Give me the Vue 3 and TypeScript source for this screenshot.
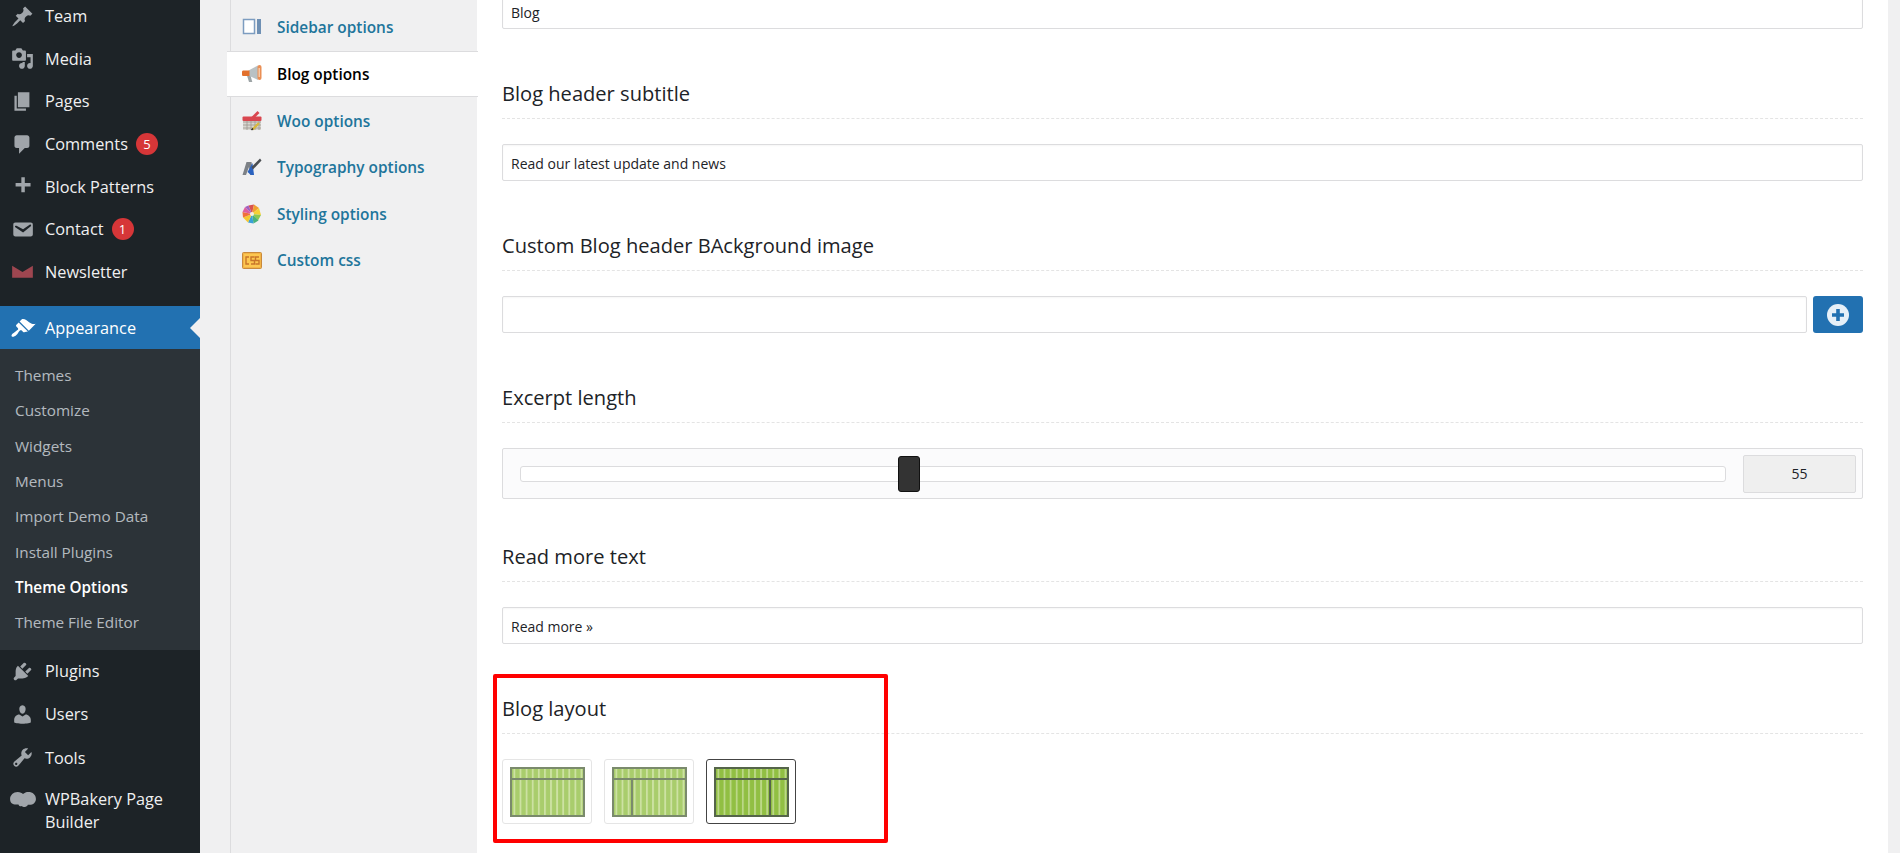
<script setup lang="ts">
const topMenu = [
  { label: 'Team', icon: 'M10.44 3.02l1.82-1.82 6.36 6.35-1.83 1.82c-1.05-.68-2.48-.57-3.41.36l-.75.75c-.92.93-1.04 2.35-.35 3.41l-1.83 1.82-2.41-2.41-2.8 2.79c-.42.42-3.38 2.71-3.8 2.29s1.86-3.39 2.28-3.81l2.79-2.79L4.1 9.36l1.83-1.82c1.05.69 2.48.57 3.4-.36l.75-.75c.93-.92 1.05-2.35.36-3.41z' },
  { label: 'Media', icon: 'M13 11V4c0-.55-.45-1-1-1h-1.67L9 1H5L3.67 3H2c-.55 0-1 .45-1 1v7c0 .55.45 1 1 1h10c.55 0 1-.45 1-1zM7 4.5c1.38 0 2.5 1.12 2.5 2.5S8.38 9.5 7 9.5 4.5 8.38 4.5 7 5.62 4.5 7 4.5zM14 6h5v10.5c0 1.38-1.12 2.5-2.5 2.5S14 17.88 14 16.5s1.12-2.5 2.5-2.5c.17 0 .34.02.5.05V9h-3V6zm-4 8.05V13h2v3.5c0 1.38-1.12 2.5-2.5 2.5S7 17.88 7 16.5 8.12 14 9.5 14c.17 0 .34.02.5.05z' },
  { label: 'Pages', icon: 'M6 15V2h10v13H6zm-1 1h8v2H3V5h2v11z' },
  { label: 'Comments', badge: '5', icon: 'M5 2h9c1.1 0 2 .9 2 2v7c0 1.1-.9 2-2 2h-2l-5 5v-5H5c-1.1 0-2-.9-2-2V4c0-1.1.9-2 2-2z' },
  { label: 'Block Patterns', icon: 'M17 7v3h-5v5H9v-5H4V7h5V2h3v5h5z' },
  { label: 'Contact', badge: '1', icon: 'M3.87 4h13.25C18.37 4 19 4.59 19 5.79v8.42c0 1.19-.63 1.79-1.88 1.79H3.87c-1.25 0-1.88-.6-1.88-1.79V5.79c0-1.2.63-1.79 1.88-1.79zm6.62 8.6l6.74-5.53c.24-.2.43-.66.13-1.07-.29-.41-.82-.42-1.17-.17l-5.7 3.86L4.8 6.83c-.35-.25-.88-.24-1.17.17-.3.41-.11.87.13 1.07z' },
  { label: 'Newsletter', red: true, icon: 'M1 5l9 5.500L19 5v10.500H1z' },
]
const brush = 'M14.48 11.06L7.41 3.99l1.5-1.5c.5-.56 2.3-.47 3.51.32 1.21.8 1.43 1.28 2.91 2.1 1.18.64 2.45 1.26 4.45.85zm-.71.71L6.7 4.7 4.93 6.47c-.39.39-.39 1.02 0 1.41l1.06 1.06c.39.39.39 1.03 0 1.42-.6.6-1.43 1.11-2.21 1.69-.35.26-.7.53-1.01.84C1.43 13.23.78 15.03 1.4 15.6c.56.6 2.36-.05 3.7-1.39.31-.31.58-.66.84-1.01.58-.78 1.09-1.61 1.69-2.21.39-.39 1.03-.39 1.42 0l1.06 1.06c.39.39 1.02.39 1.41 0z'
const subMenu = ['Themes', 'Customize', 'Widgets', 'Menus', 'Import Demo Data', 'Install Plugins', 'Theme Options', 'Theme File Editor']
const bottomMenu = [
  { label: 'Plugins', icon: 'M13.11 4.36L9.87 7.6 8 5.73l3.24-3.24c.35-.34 1.05-.2 1.56.32.52.51.66 1.21.31 1.55zm-8 1.77l.91-1.12 9.01 9.01-1.19.84c-.71.71-2.63 1.16-3.82 1.16H6.14L4.9 17.26c-.59.59-1.54.59-2.12 0-.59-.58-.59-1.53 0-2.12l1.24-1.24v-3.88c0-1.13.4-3.19 1.09-3.89zm7.26 3.97l3.24-3.24c.34-.35 1.04-.21 1.55.31.52.51.66 1.21.31 1.55l-3.24 3.25z' },
  { label: 'Users', icon: 'M10 9.25c-2.27 0-2.73-3.44-2.73-3.44C7 4.02 7.82 2 9.97 2c2.16 0 2.98 2.02 2.71 3.81 0 0-.41 3.44-2.68 3.44zm0 2.57L12.72 10c2.39 0 4.52 2.33 4.52 4.53v2.49s-3.65 1.13-7.24 1.13c-3.65 0-7.24-1.13-7.24-1.13v-2.49c0-2.25 1.94-4.48 4.47-4.48z' },
  { label: 'Tools', icon: 'M16.68 9.77c-1.34 1.34-3.3 1.67-4.95.99l-5.41 6.52c-.99.99-2.59.99-3.58 0s-.99-2.59 0-3.57l6.52-5.42c-.68-1.65-.35-3.61.99-4.95 1.28-1.28 3.12-1.62 4.72-1.06l-2.89 2.89 2.82 2.82 2.86-2.87c.53 1.58.18 3.39-1.08 4.65zM3.81 16.21c.4.39 1.04.39 1.43 0 .4-.4.4-1.04 0-1.43-.39-.4-1.03-.4-1.43 0-.39.39-.39 1.03 0 1.43z' },
]
const navItems = ['Sidebar options', 'Blog options', 'Woo options', 'Typography options', 'Styling options', 'Custom css']
const layouts = [
  { id: 'full', divider: 0, active: false },
  { id: 'left', divider: 20, active: false },
  { id: 'right', divider: 56, active: true },
]
const sliderValue = 55
</script>

<template>
  <div class="page">
    <aside class="adminmenu">
      <ul class="menu top">
        <li v-for="item in topMenu" :key="item.label" class="menu-row">
          <svg class="dash" :class="{ red: item.red }" viewBox="0 0 20 20"><path :d="item.icon" /></svg>
          <span>{{ item.label }}</span>
          <b v-if="item.badge" class="badge">{{ item.badge }}</b>
        </li>
      </ul>
      <div class="menu-row current">
        <svg class="dash" viewBox="0 -1 20 20"><path :d="brush" /></svg>
        <span>Appearance</span>
        <i class="arrow"></i>
      </div>
      <ul class="submenu">
        <li v-for="s in subMenu" :key="s" :class="{ on: s === 'Theme Options' }">{{ s }}</li>
      </ul>
      <ul class="menu">
        <li v-for="item in bottomMenu" :key="item.label" class="menu-row">
          <svg class="dash" viewBox="0 0 20 20"><path :d="item.icon" /></svg>
          <span>{{ item.label }}</span>
        </li>
        <li class="menu-row tall">
          <svg class="dash wide" viewBox="0 0 26 20">
            <path d="M8 2c2.500 0 4 1 5 2 1.500-1.500 3-2 5-2 4 0 7 2.500 7 6.500 0 3-2.500 5.500-6 5.500-.5 0-1 0-1.500-.1-.5 1.200-1.500 2.100-3 2.100-1.200 0-2-.4-2.600-1-.6.400-1.400.5-2.200 0-.5-.3-.8-.8-.9-1.400C4 14.500 1 12.500 1 8.500 1 5 4 2 8 2z" />
          </svg>
          <span>WPBakery Page Builder</span>
        </li>
      </ul>
    </aside>

    <main class="wrap">
      <div class="panel">
        <nav class="tabs">
          <a v-for="n in navItems" :key="n" class="tab" :class="{ active: n === 'Blog options' }">
            <svg v-if="n === 'Sidebar options'" class="tab-icon" viewBox="0 0 20 20">
              <rect x="1.500" y="1.500" width="11" height="14" fill="#fff" stroke="#7c9cc0" stroke-width="1.500" />
              <rect x="15" y="1" width="4" height="15" fill="#6f90b4" />
            </svg>
            <svg v-else-if="n === 'Blog options'" class="tab-icon" viewBox="0 0 20 20">
              <path d="M5 11.500h3.500l1.800 6.500H7z" fill="#9da4a6" />
              <path d="M6.500 6.500L16 1.500v14.500L6.500 11.500z" fill="#b9c1c4" />
              <path d="M1.500 6.500h6v5.500h-6C.5 12 0 11.500 0 10.500V8c0-1 .5-1.500 1.500-1.500z" fill="#e2702c" />
              <rect x="15.500" y="1" width="4" height="15" rx="2" fill="#ea8f55" />
              <rect x="16.500" y="4" width="1.500" height="9" fill="#f5c9a8" />
            </svg>
            <svg v-else-if="n === 'Woo options'" class="tab-icon" viewBox="0 0 20 20">
              <rect x="1" y="8" width="18" height="11" fill="#d9d6d0" />
              <path d="M1 11h18M1 14h18M1 17h18M5 9v10M9 9v10M13 9v10M17 9v10" stroke="#9c9890" stroke-width=".8" />
              <rect x=".5" y="5.500" width="19" height="4.500" rx="1" fill="#d9464f" />
              <path d="M9.500 8l7-7" stroke="#d9464f" stroke-width="2.800" />
              <path d="M10.500 18.500l6.500-6.500" stroke="#d8b740" stroke-width="2.400" />
              <path d="M9.500 19l1.500-1.500" stroke="#222" stroke-width="1.400" />
            </svg>
            <svg v-else-if="n === 'Typography options'" class="tab-icon" viewBox="0 0 20 20">
              <path d="M.5 17L4.500 4h5l2 13H8l-1-8-3 8z" fill="#7d8186" />
              <path d="M5.500 14l5-9 1.500 12H9z" fill="#2a62c0" />
              <path d="M9.500 9l8.500-8.500 1.500 2-8.500 9z" fill="#4b4e52" />
            </svg>
            <svg v-else-if="n === 'Styling options'" class="tab-icon" viewBox="0 0 20 20">
              <path d="M10 10L6.500 1.500 12 .5z" fill="#d9534f" />
              <path d="M10 10l2-9.500 5 3.500z" fill="#f0a030" />
              <path d="M10 10l7-6 2 7z" fill="#f5d033" />
              <path d="M10 10l9 1-3 5.500z" fill="#8cc850" />
              <path d="M10 10l6.500 6.500-5 3z" fill="#49b27a" />
              <path d="M10 10l1.500 9.500-5.500-1z" fill="#3aa0d8" />
              <path d="M10 10l-4 8.500-5-5z" fill="#f5c830" />
              <path d="M10 10L1 13.500.5 8z" fill="#f0703a" />
              <path d="M10 10L.5 8 3 3z" fill="#dd5fa0" />
              <path d="M10 10L3 3l3.500-1.500z" fill="#a060c0" />
              <circle cx="10" cy="10" r="2" fill="#f7efe0" />
            </svg>
            <svg v-else class="tab-icon" viewBox="0 0 20 20">
              <rect x=".5" y="1.500" width="19" height="16" rx="1" fill="#f2b448" stroke="#c98a3c" />
              <rect x="2" y="3" width="16" height="13" fill="#fdc750" />
              <path d="M7 6H4v7h3M12.500 6H9v3.500h3.500V13H9M17 6h-3.500v3.500H17V13h-3.500" fill="none" stroke="#c8752a" stroke-width="1.400" />
            </svg>
            <span>{{ n }}</span>
          </a>
        </nav>

        <div class="content">
          <section class="field first">
            <div class="input"><span>Blog</span></div>
          </section>

          <section class="field">
            <h3>Blog header subtitle</h3>
            <div class="input"><span>Read our latest update and news</span></div>
          </section>

          <section class="field">
            <h3>Custom Blog header BAckground image</h3>
            <div class="upload">
              <div class="input"></div>
              <button class="add" type="button">
                <svg width="22" height="22" viewBox="0 0 22 22">
                  <circle cx="11" cy="11" r="11" fill="#e6f0f8" />
                  <path d="M9.200 5h3.600v4.200H17v3.600h-4.200V17H9.200v-4.200H5V9.200h4.200z" fill="#2271b1" />
                </svg>
              </button>
            </div>
          </section>

          <section class="field">
            <h3>Excerpt length</h3>
            <div class="slider-box">
              <div class="track"><i class="handle"></i></div>
              <div class="value">{{ sliderValue }}</div>
            </div>
          </section>

          <section class="field">
            <h3>Read more text</h3>
            <div class="input"><span>Read more »</span></div>
          </section>

          <section class="field layouts">
            <h3>Blog layout</h3>
            <div class="layout-list">
              <div v-for="l in layouts" :key="l.id" class="layout" :class="{ active: l.active }">
                <svg width="75" height="50" viewBox="0 0 75 50">
                  <defs>
                    <pattern :id="'stripes-' + l.id" width="6.100" height="50" patternUnits="userSpaceOnUse">
                      <rect width="6.100" height="50" :fill="l.active ? '#91bf43' : '#a9cd6c'" />
                      <rect x="3.500" width="1.800" height="50" :fill="l.active ? '#bcd888' : '#cde2a3'" />
                    </pattern>
                  </defs>
                  <rect x="1" y="1" width="73" height="48" :fill="`url(#stripes-${l.id})`" :stroke="l.active ? '#55654a' : '#7a8a6c'" stroke-width="2" />
                  <path d="M1 12h73" :stroke="l.active ? '#55654a' : '#7a8a6c'" stroke-width="2" fill="none" />
                  <path v-if="l.divider" :d="`M${l.divider} 12v37`" :stroke="l.active ? '#55654a' : '#7a8a6c'" stroke-width="2" fill="none" />
                </svg>
              </div>
            </div>
            <div class="highlight"></div>
          </section>
        </div>
      </div>
    </main>
  </div>
</template>

<style>
html, body {
  margin: 0;
  height: 100%;
  overflow: hidden;
  background: #f0f0f1;
}
</style>

<style scoped>
.page {
  display: flex;
  height: 853px;
  overflow: hidden;
  background: #f0f0f1;
  font-family: "Open Sans", "Noto Sans", sans-serif;
}

.adminmenu {
  width: 200px;
  flex: none;
  background: #1d2327;
  color: #f0f0f1;
  font-size: 16.300px;
}

ul {
  list-style: none;
  margin: 0;
  padding: 0;
}

/* the page is scrolled, the first rows start above the fold */
.menu.top {
  margin-top: -5px;
  padding-bottom: 13px;
}

.menu-row {
  position: relative;
  display: flex;
  align-items: center;
  height: 42.600px;
  padding-left: 45px;
}

.dash {
  position: absolute;
  left: 11px;
  width: 23px;
  height: 23px;
  fill: #a0a5aa;
}

.dash.red {
  fill: #9e4650;
}

.dash.wide {
  left: 9px;
  width: 28px;
  top: 10px;
}

.badge {
  width: 22px;
  height: 22px;
  margin-left: 8px;
  border-radius: 50%;
  background: #d63638;
  color: #fff;
  font-size: 13px;
  font-weight: 400;
  line-height: 22px;
  text-align: center;
}

.current {
  background: #2271b1;
  color: #fff;
  height: 43px;
  padding-top: 1px;
  box-sizing: border-box;
}

.current .dash {
  left: 10px;
  width: 26px;
  height: 26px;
  fill: #fff;
}

.arrow {
  position: absolute;
  right: 0;
  top: 12px;
  border: 10px solid transparent;
  border-left: 0;
  border-right-color: #f0f0f1;
}

.submenu {
  background: #2c3338;
  padding: 9px 0 9px;
  font-size: 15.300px;
  color: rgba(240, 246, 252, 0.7);
}

.submenu li {
  height: 35.300px;
  line-height: 35.300px;
  padding-left: 15px;
}

.submenu .on {
  color: #fff;
  font-weight: 600;
}

.menu:not(.top) .menu-row {
  height: 43.300px;
}

.menu:not(.top) .tall {
  height: auto;
  padding: 9px 20px 0 45px;
  line-height: 23px;
}

.wrap {
  flex: 1;
  min-width: 0;
  padding: 0 12px 0 30px;
}

.panel {
  display: flex;
  height: 100%;
}

.tabs {
  width: 246px;
  flex: none;
  border-left: 1px solid #dcdcde;
  border-right: 1px solid #dcdcde;
  padding-top: 4.500px;
}

.tab {
  position: relative;
  display: flex;
  align-items: center;
  height: 46.500px;
  padding-left: 11px;
  gap: 15px;
  color: #21759b;
  font-size: 15.400px;
  font-weight: 600;
}

.tab.active {
  color: #000;
  background: #fff;
  height: 44px;
  margin: 0 -1px 1px -4px;
  padding-left: 15px;
  border-top: 1px solid #dcdcde;
  border-bottom: 1px solid #dcdcde;
  box-sizing: content-box;
}

.tab-icon {
  width: 20px;
  height: 20px;
  flex: none;
}

.content {
  flex: 1;
  min-width: 0;
  background: #fff;
  padding: 0 25px;
  margin-left: -1px;
  color: #1d2327;
}

.field {
  position: relative;
  padding-top: 51px;
}

.field.first {
  margin-top: -59px;
}

.first .input {
  line-height: 39px;
}

.field h3 {
  margin: 0 0 25px;
  padding-bottom: 11px;
  border-bottom: 1px dashed #e4e4e4;
  font-size: 20.100px;
  font-weight: 400;
  line-height: 27px;
}

.input {
  flex: 1;
  height: 37px;
  box-sizing: border-box;
  border: 1px solid #dcdcde;
  border-radius: 2px;
  box-shadow: inset 0 1px 2px rgba(0, 0, 0, 0.04);
  padding: 0 8px;
  font-size: 14px;
  line-height: 37px;
}

.upload {
  display: flex;
  gap: 6px;
}

.add {
  width: 50px;
  height: 37px;
  border: 0;
  border-radius: 3px;
  background: #2271b1;
  padding: 0;
  display: flex;
  align-items: center;
  justify-content: center;
}

.slider-box {
  display: flex;
  align-items: center;
  gap: 17px;
  height: 51px;
  box-sizing: border-box;
  margin-bottom: -7px;
  border: 1px solid #dcdcde;
  border-radius: 2px;
  background: #fbfbfc;
  padding: 0 6px 0 17px;
}

.track {
  position: relative;
  flex: 1;
  height: 16px;
  box-sizing: border-box;
  border: 1px solid #dcdcde;
  border-radius: 3px;
  background: #fff;
}

.handle {
  position: absolute;
  left: 377px;
  top: -11px;
  width: 22px;
  height: 36px;
  box-sizing: border-box;
  border: 1px solid #111;
  border-radius: 3px;
  background: #333;
}

.value {
  width: 113px;
  height: 38px;
  box-sizing: border-box;
  border: 1px solid #dcdcde;
  border-radius: 2px;
  background: #efefef;
  font-size: 14px;
  line-height: 36px;
  text-align: center;
}

.layout-list {
  display: flex;
  gap: 12px;
}

.layout {
  width: 90px;
  height: 65px;
  box-sizing: border-box;
  border: 1px solid #e5e5e5;
  border-radius: 3px;
  padding: 7px;
}

.layout.active {
  border-color: #444;
}

.layout svg {
  display: block;
}

.highlight {
  position: absolute;
  left: -9px;
  top: 30px;
  width: 395px;
  height: 169px;
  box-sizing: border-box;
  border: 4px solid #f00;
  border-radius: 2px;
  pointer-events: none;
}
</style>
